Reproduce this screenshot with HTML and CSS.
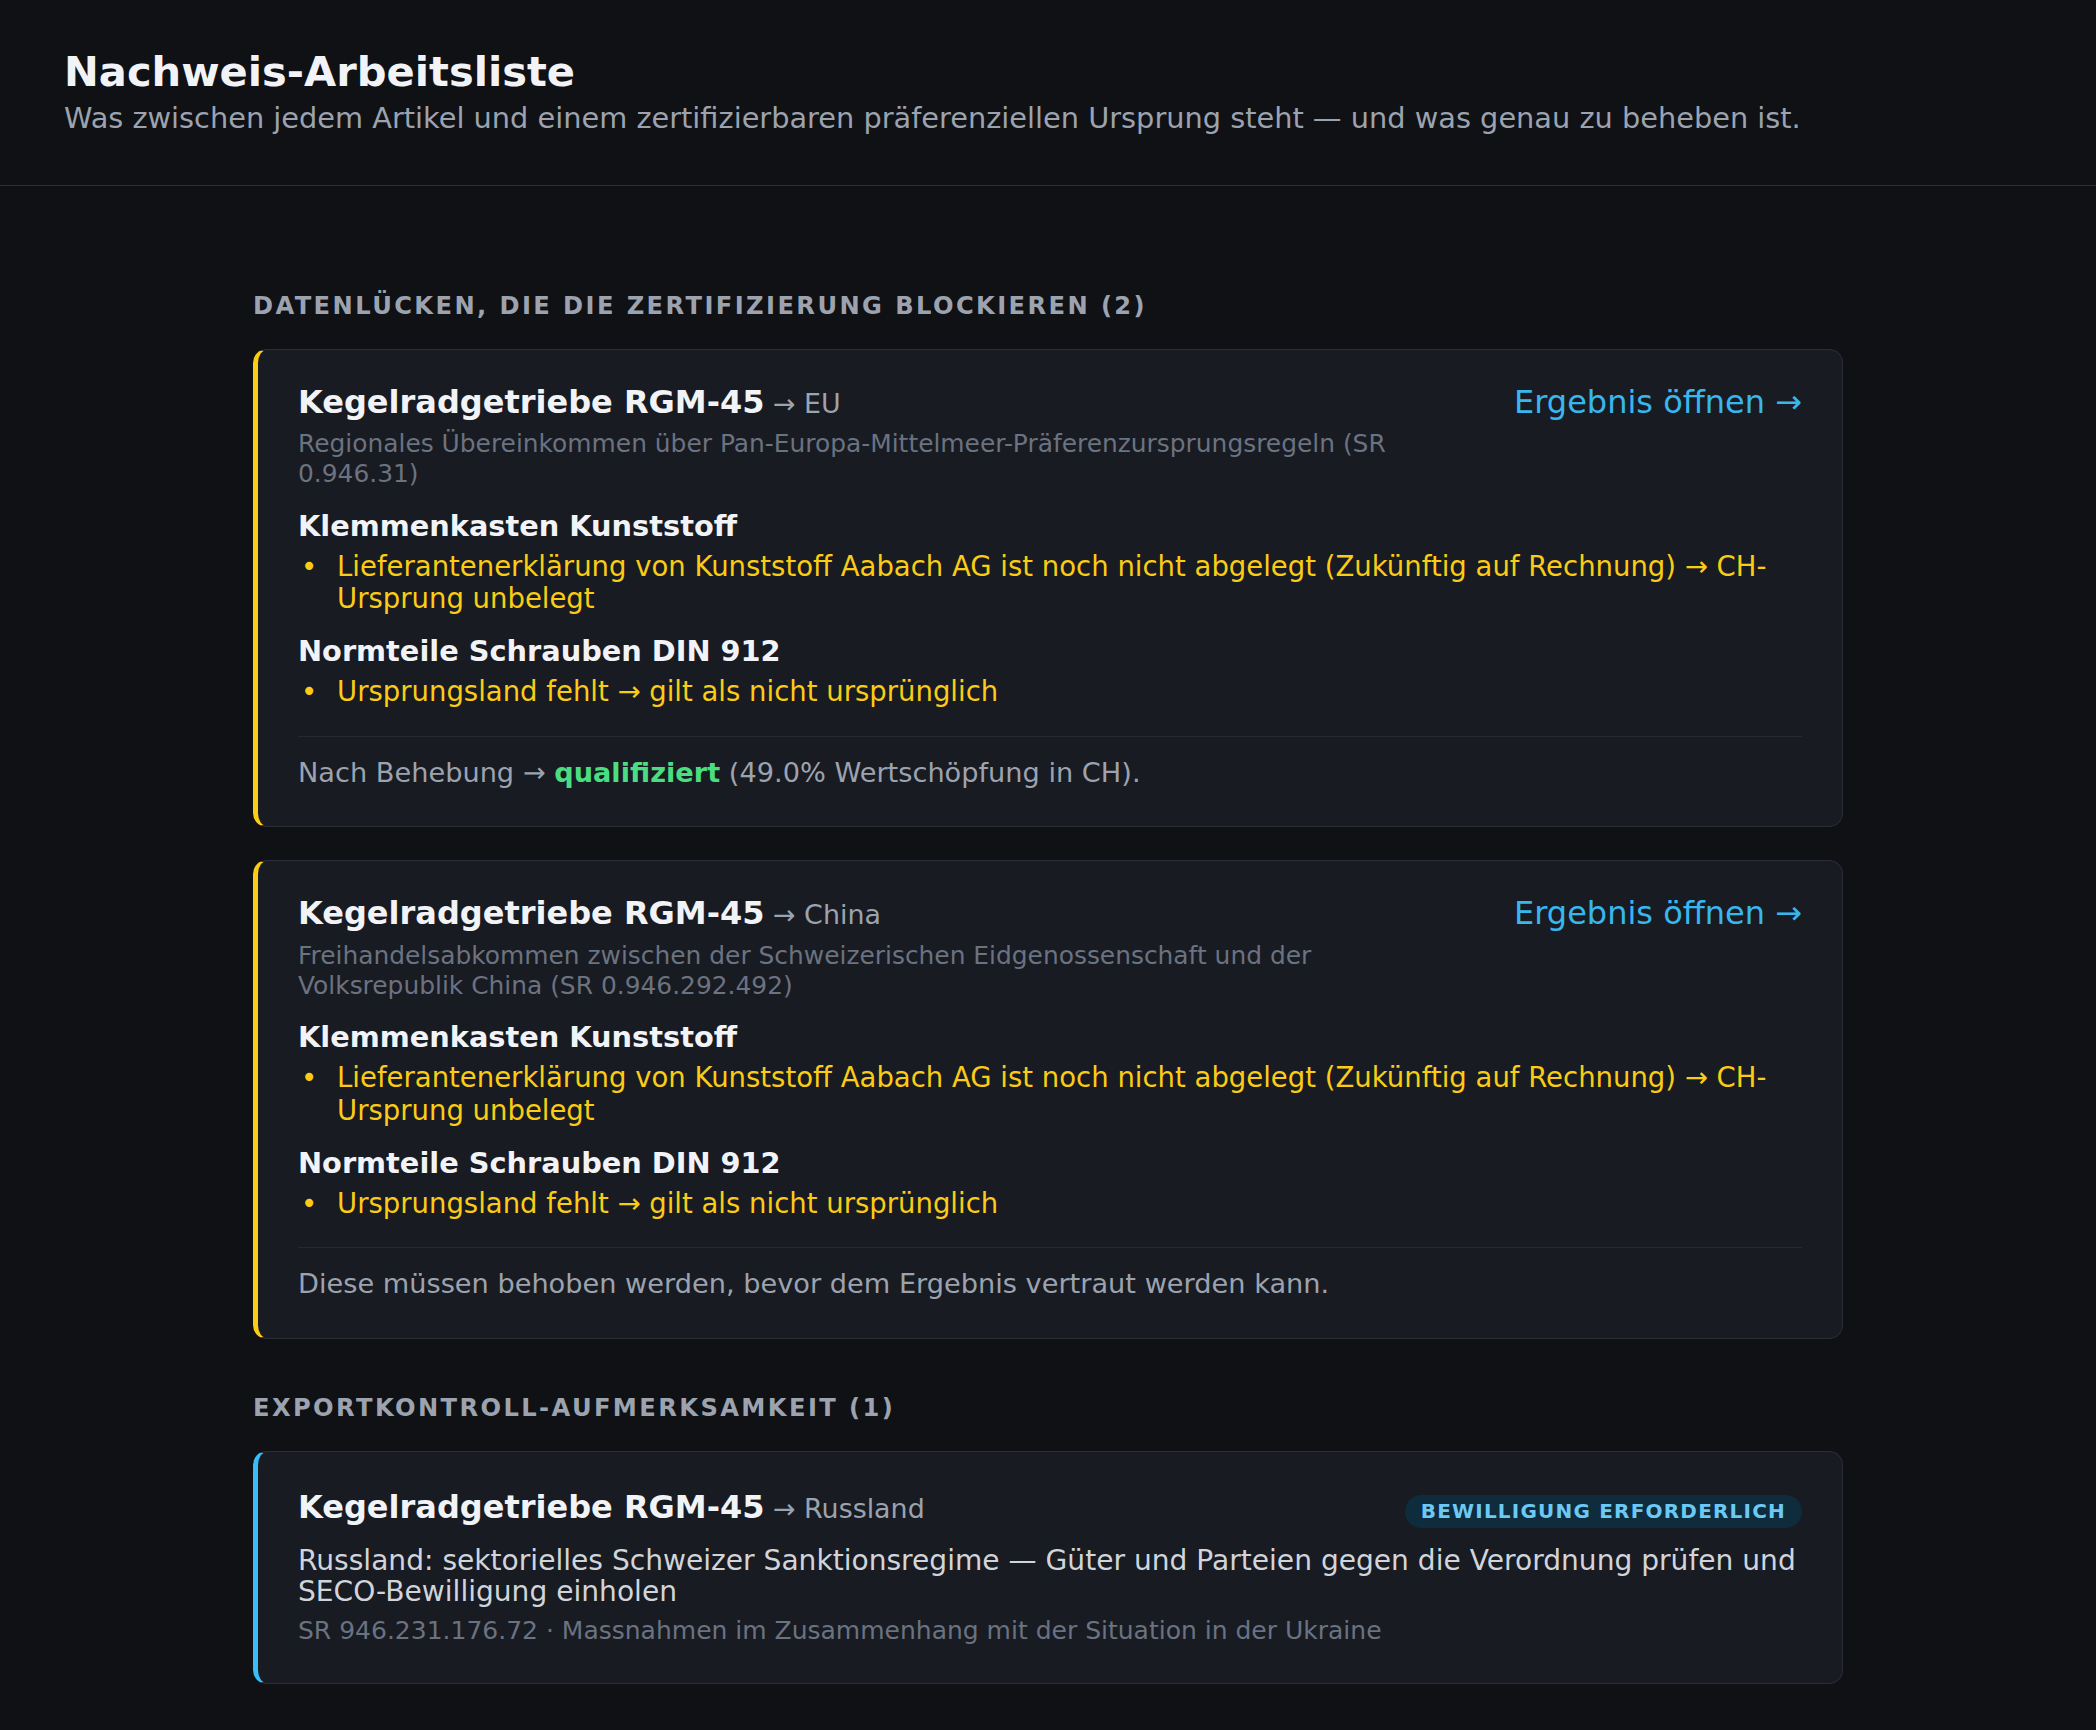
FILE: index.html
```html
<!DOCTYPE html>
<html lang="de">
<head>
<meta charset="utf-8">
<title>Nachweis-Arbeitsliste</title>
<link rel="stylesheet" href="styles.css">
</head>
<body>
<header class="page-header">
  <h1 class="page-title">Nachweis-Arbeitsliste</h1>
  <p class="page-subtitle">Was zwischen jedem Artikel und einem zertifizierbaren präferenziellen Ursprung steht — und was genau zu beheben ist.</p>
</header>
<main class="worklist">
  <section class="group">
    <h2 class="group-title">DATENLÜCKEN, DIE DIE ZERTIFIZIERUNG BLOCKIEREN (2)</h2>

    <article class="card">
      <div class="card-head">
        <div class="card-headline">
          <div class="card-title"><strong>Kegelradgetriebe RGM-45</strong> <span class="card-dest">→ EU</span></div>
          <div class="card-agreement">Regionales Übereinkommen über Pan-Europa-Mittelmeer-Präferenzursprungsregeln (SR 0.946.31)</div>
        </div>
        <a class="card-link" href="#">Ergebnis öffnen →</a>
      </div>
      <div class="item">
        <div class="item-name">Klemmenkasten Kunststoff</div>
        <ul class="issues">
          <li>Lieferantenerklärung von Kunststoff Aabach AG ist noch nicht abgelegt (Zukünftig auf Rechnung) → CH-Ursprung unbelegt</li>
        </ul>
      </div>
      <div class="item">
        <div class="item-name">Normteile Schrauben DIN 912</div>
        <ul class="issues">
          <li>Ursprungsland fehlt → gilt als nicht ursprünglich</li>
        </ul>
      </div>
      <p class="card-foot">Nach Behebung → <strong class="ok">qualifiziert</strong> (49.0% Wertschöpfung in CH).</p>
    </article>

    <article class="card">
      <div class="card-head">
        <div class="card-headline">
          <div class="card-title"><strong>Kegelradgetriebe RGM-45</strong> <span class="card-dest">→ China</span></div>
          <div class="card-agreement">Freihandelsabkommen zwischen der Schweizerischen Eidgenossenschaft und der Volksrepublik China (SR 0.946.292.492)</div>
        </div>
        <a class="card-link" href="#">Ergebnis öffnen →</a>
      </div>
      <div class="item">
        <div class="item-name">Klemmenkasten Kunststoff</div>
        <ul class="issues">
          <li>Lieferantenerklärung von Kunststoff Aabach AG ist noch nicht abgelegt (Zukünftig auf Rechnung) → CH-Ursprung unbelegt</li>
        </ul>
      </div>
      <div class="item">
        <div class="item-name">Normteile Schrauben DIN 912</div>
        <ul class="issues">
          <li>Ursprungsland fehlt → gilt als nicht ursprünglich</li>
        </ul>
      </div>
      <p class="card-foot">Diese müssen behoben werden, bevor dem Ergebnis vertraut werden kann.</p>
    </article>
  </section>

  <section class="group">
    <h2 class="group-title">EXPORTKONTROLL-AUFMERKSAMKEIT (1)</h2>
    <article class="card card--alert">
      <div class="card-head card-head--alert">
        <div class="card-headline">
          <div class="card-title"><strong>Kegelradgetriebe RGM-45</strong> <span class="card-dest">→ Russland</span></div>
        </div>
        <span class="card-badge">BEWILLIGUNG ERFORDERLICH</span>
      </div>
      <p class="card-body">Russland: sektorielles Schweizer Sanktionsregime — Güter und Parteien gegen die Verordnung prüfen und SECO-Bewilligung einholen</p>
      <p class="card-ref">SR 946.231.176.72 · Massnahmen im Zusammenhang mit der Situation in der Ukraine</p>
    </article>
  </section>
</main>
</body>
</html>
```

FILE: styles.css
```css
*,
*::before,
*::after {
  box-sizing: border-box;
}

html,
body {
  margin: 0;
  background: #0f1115;
}

body {
  font-family: "DejaVu Sans", "Noto Sans", sans-serif;
  color: #e5e7eb;
}

.page-header {
  padding: 47px 64px 48px;
  border-bottom: 1px solid #2a2d33;
}

.page-title {
  margin: 0;
  font-size: 41.6px;
  line-height: 49.7px;
  font-weight: 700;
  color: #f1f3f6;
}

.page-subtitle {
  margin: 3px 0 0;
  font-size: 28.8px;
  line-height: 37px;
  color: #9ca3af;
}

.worklist {
  max-width: 1590px;
  margin: 0 auto;
  padding: 106px 0 60px;
}

.group + .group {
  margin-top: 55px;
}

.group-title {
  margin: 0 0 29px;
  font-size: 24.2px;
  line-height: 28px;
  font-weight: 700;
  letter-spacing: 2.4px;
  color: #9ca3af;
}

.card {
  background: #181b22;
  border: 1px solid #2a2e37;
  border-left: 5px solid #facc15;
  border-radius: 14px;
  padding: 34px 40px;
}

.card + .card {
  margin-top: 33px;
}

.card--alert {
  border-left-color: #38bdf8;
  padding-bottom: 36.5px;
}

.card-head {
  display: flex;
  justify-content: space-between;
  align-items: flex-start;
  gap: 21px;
}

.card-head--alert {
  align-items: baseline;
  padding-top: 3px;
}

.card-headline {
  flex: 1;
  min-width: 0;
}

.card-title {
  font-size: 26.9px;
  line-height: 37px;
  color: #9ca3af;
}

.card-title strong {
  font-size: 32px;
  font-weight: 700;
  color: #f1f3f6;
}

.card-agreement {
  max-width: 1140px;
  margin-top: 7.6px;
  font-size: 24.9px;
  line-height: 30px;
  color: #6b7280;
}

.card-link {
  flex: none;
  font-size: 32px;
  line-height: 37px;
  color: #38b6ee;
  text-decoration: none;
}

.item {
  margin-top: 19.5px;
}

.item-name {
  font-size: 28.8px;
  line-height: 34px;
  font-weight: 700;
  color: #f1f3f6;
}

.issues {
  list-style: none;
  margin: 7px 0 0;
  padding: 0;
}

.issues li {
  display: flex;
  font-size: 27.5px;
  line-height: 32.5px;
  color: #facc15;
}

.issues li::before {
  content: "•";
  flex: none;
  width: 39px;
  padding-left: 3px;
}

.card-foot {
  margin: 28px 0 0;
  padding-top: 17px;
  border-top: 1px solid #262a31;
  font-size: 27.2px;
  line-height: 38.6px;
  color: #9ca3af;
}

.ok {
  color: #4ade80;
  font-weight: 700;
}

.card-badge {
  flex: none;
  padding: 5px 16px;
  border-radius: 999px;
  background: #0e2c3c;
  color: #6cc9f5;
  font-size: 20px;
  line-height: 23px;
  font-weight: 700;
  letter-spacing: 1.2px;
}

.card-body {
  margin: 16.9px 0 0;
  font-size: 28.1px;
  line-height: 31px;
  color: #d1d5db;
}

.card-ref {
  margin: 9.4px 0 0;
  font-size: 25px;
  line-height: 30px;
  color: #6b7280;
}
```
